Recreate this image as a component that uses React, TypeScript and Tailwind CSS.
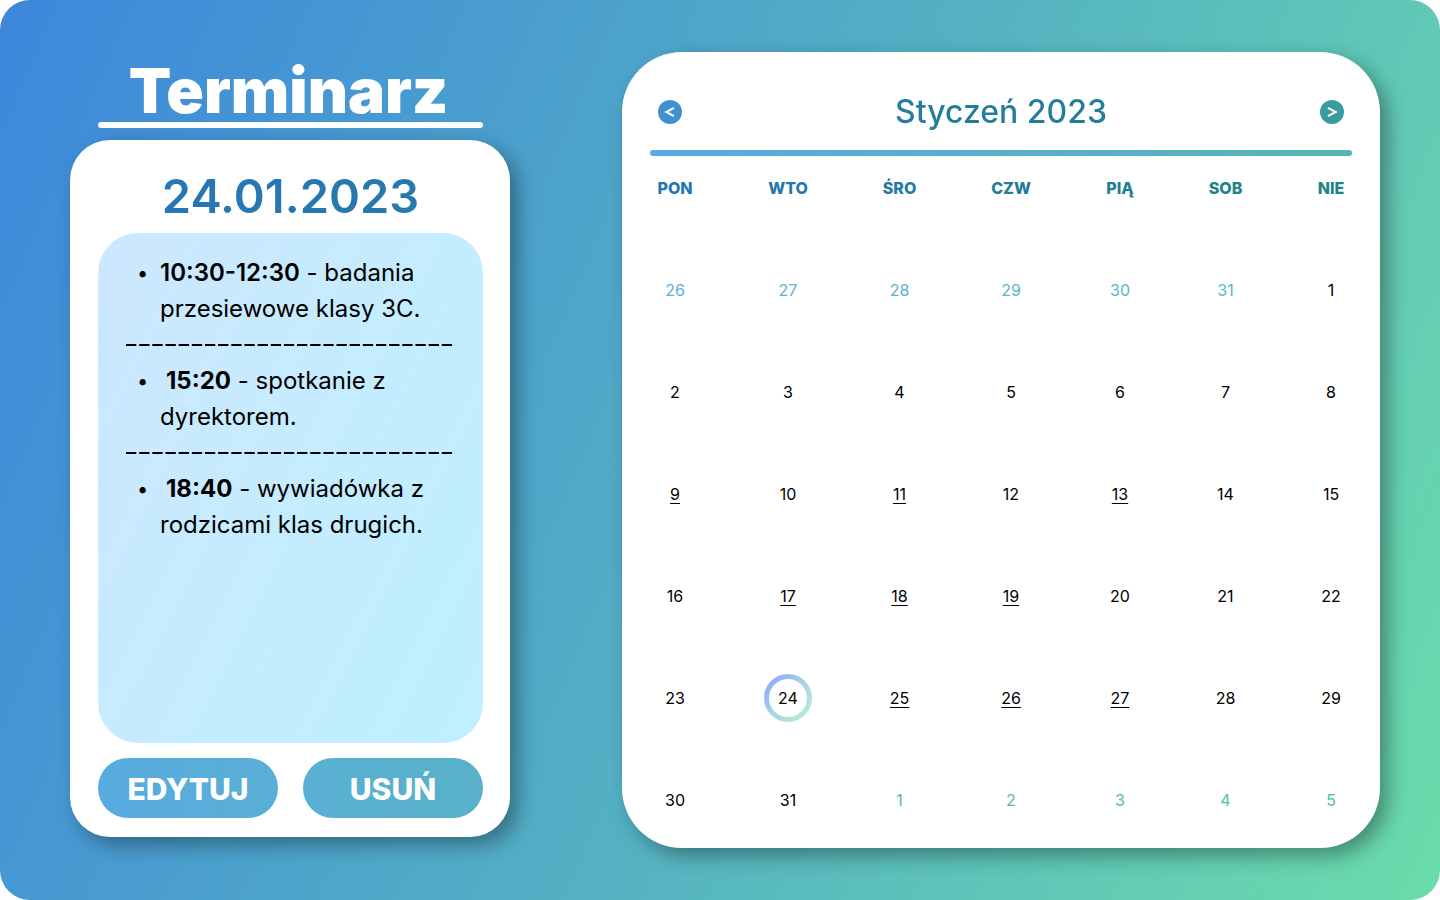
import React from "react";

type Day = { label: number; outside?: string; event?: boolean; selected?: boolean };

const weekdays = [
  { label: "PON", color: "text-[#2775b3]", width: "w-[106px]" },
  { label: "WTO", color: "text-[#2677ab]", width: "w-[120px]" },
  { label: "ŚRO", color: "text-[#257aa3]", width: "w-[103px]" },
  { label: "CZW", color: "text-[#247c9a]", width: "w-[120px]" },
  { label: "PIĄ", color: "text-[#237f92]", width: "w-[98px]" },
  { label: "SOB", color: "text-[#22818a]", width: "w-[113px]" },
  { label: "NIE", color: "text-[#218483]", width: "w-[98px]" },
];

const plain = (from: number, events: number[] = [], count = 7): Day[] =>
  Array.from({ length: count }, (_, i) => ({ label: from + i, event: events.includes(from + i) }));

const weeks: Day[][] = [
  [
    { label: 26, outside: "text-[#61addd]" },
    { label: 27, outside: "text-[#5fafd8]" },
    { label: 28, outside: "text-[#5eb1d1]" },
    { label: 29, outside: "text-[#5db4cb]" },
    { label: 30, outside: "text-[#5bb6c5]" },
    { label: 31, outside: "text-[#5ab8c0]" },
    { label: 1 },
  ],
  plain(2),
  plain(9, [9, 11, 13]),
  plain(16, [17, 18, 19]),
  plain(23, [25, 26, 27]).map((d) => (d.label === 24 ? { ...d, selected: true } : d)),
  [
    { label: 30 },
    { label: 31 },
    { label: 1, outside: "text-[#54b8b4]" },
    { label: 2, outside: "text-[#52baae]" },
    { label: 3, outside: "text-[#50bca8]" },
    { label: 4, outside: "text-[#4ebea2]" },
    { label: 5, outside: "text-[#4cc09c]" },
  ],
];

const events = [
  { time: "10:30-12:30", text: "badania przesiewowe klasy 3C." },
  { time: "15:20", text: "spotkanie z dyrektorem.", indent: true },
  { time: "18:40", text: "wywiadówka z rodzicami klas drugich.", indent: true },
];

function Chevron({ d }: { d: string }) {
  return (
    <svg viewBox="0 0 24 24" className="size-6" fill="none" stroke="white" strokeWidth="2" aria-hidden="true">
      <path d={d} />
    </svg>
  );
}

function Agenda() {
  return (
    <section className="flex w-[440px] shrink-0 flex-col">
      <div className="ml-7 mr-[27px] flex flex-col pt-1">
        <h1 className="pt-1 pr-1 text-center text-[62px] leading-[62px] font-black text-white">Terminarz</h1>
        <div className="h-1.5 rounded-full bg-white" />
      </div>
      <div className="mt-3 flex flex-col rounded-[40px] bg-white pt-6 pr-[27px] pb-[19px] pl-7 shadow-[8px_8px_20px_rgba(0,0,0,0.35)]">
        <h2 className="self-center bg-linear-to-r from-[#2776b7] to-[#2679ab] bg-clip-text text-[47px] leading-[64px] font-semibold text-transparent">
          24.01.2023
        </h2>
        <ul className="mt-[5px] min-h-[510px] rounded-[40px] bg-linear-[117deg,#cde7ff,#bdf0ff] px-7 pt-[22px] text-2xl leading-9 text-black">
          {events.map((e, i) => (
            <li key={e.time}>
              {i > 0 && (
                <div className="flex h-9 items-center">
                  <div className="h-0.5 w-full bg-[linear-gradient(90deg,#000_76%,transparent_76%)] bg-[length:13px_2px] [background-repeat:round]" />
                </div>
              )}
              <div className="flex">
                <span className="w-[34px] shrink-0 pl-[11px] text-xl leading-9">•</span>
                <p className="min-w-0">
                  <strong className={e.indent ? "pl-1.5 font-bold" : "font-semibold"}>{e.time}</strong> - {e.text}
                </p>
              </div>
            </li>
          ))}
        </ul>
        <div className="mt-[15px] grid grid-cols-2 gap-[25px]">
          <button className="h-[60px] rounded-full bg-linear-to-r from-[#58abe0] to-[#59afd5] pt-0.5 text-[30px] leading-none font-extrabold text-white">
            EDYTUJ
          </button>
          <button className="h-[60px] rounded-full bg-linear-to-r from-[#59b0d4] to-[#58b1c8] pt-0.5 text-[30px] leading-none font-extrabold text-white">
            USUŃ
          </button>
        </div>
      </div>
    </section>
  );
}

function Calendar() {
  return (
    <section className="min-w-0 flex-1 rounded-[60px] bg-white pt-9 pb-9 shadow-[8px_8px_20px_rgba(0,0,0,0.35)]">
      <header className="flex h-12 items-center justify-between px-9">
        <button aria-label="Poprzedni miesiąc" className="size-6 rounded-full bg-[#4090d0]">
          <Chevron d="M16 7.8 8.3 12l7.7 4.2" />
        </button>
        <h2 className="bg-linear-to-r from-[#257c9f] to-[#247e98] bg-clip-text text-[32px] leading-[48px] font-medium text-transparent">
          Styczeń 2023
        </h2>
        <button aria-label="Następny miesiąc" className="size-6 rounded-full bg-[#3b9b9d]">
          <Chevron d="M8 7.8 15.7 12 8 16.2" />
        </button>
      </header>
      <div className="mx-7 mt-3.5 h-1.5 rounded-full bg-linear-to-r from-[#5aa9e8] to-[#54b7b2]" />
      <table className="w-full table-fixed border-collapse text-center text-base leading-6 text-black">
        <thead>
          <tr>
            {weekdays.map((d) => (
              <th key={d.label} scope="col" className={`${d.width} ${d.color} h-11 p-0 align-bottom font-extrabold`}>
                {d.label}
              </th>
            ))}
          </tr>
        </thead>
        <tbody>
          {weeks.map((week, w) => (
            <tr key={w}>
              {week.map((day) => (
                <td key={day.label} className="h-[102px] p-0 align-bottom">
                  <span
                    className={`relative inline-block ${day.outside ?? ""} ${day.event ? "underline underline-offset-[3px]" : ""}`}
                  >
                    {day.selected && (
                      <svg
                        viewBox="0 0 48 48"
                        className="absolute top-1/2 left-1/2 size-12 -translate-1/2"
                        fill="none"
                        aria-hidden="true"
                      >
                        <defs>
                          <linearGradient id="ring" x1="0.15" y1="0.15" x2="0.85" y2="0.85">
                            <stop stopColor="#93b2f6" />
                            <stop offset="0.5" stopColor="#a8d4e2" />
                            <stop offset="1" stopColor="#b1e8d6" />
                          </linearGradient>
                        </defs>
                        <circle cx="24" cy="24" r="21.5" stroke="url(#ring)" strokeWidth="5" />
                      </svg>
                    )}
                    {day.label}
                  </span>
                </td>
              ))}
            </tr>
          ))}
        </tbody>
      </table>
    </section>
  );
}

export default function App() {
  return (
    <main className="flex min-h-screen items-start gap-28 rounded-[30px] bg-linear-[113deg,#3d87dc,#54b1c3_53%,#6bdcab] py-[52px] pr-15 pl-[70px] font-['Inter',sans-serif]">
      <Agenda />
      <Calendar />
    </main>
  );
}
